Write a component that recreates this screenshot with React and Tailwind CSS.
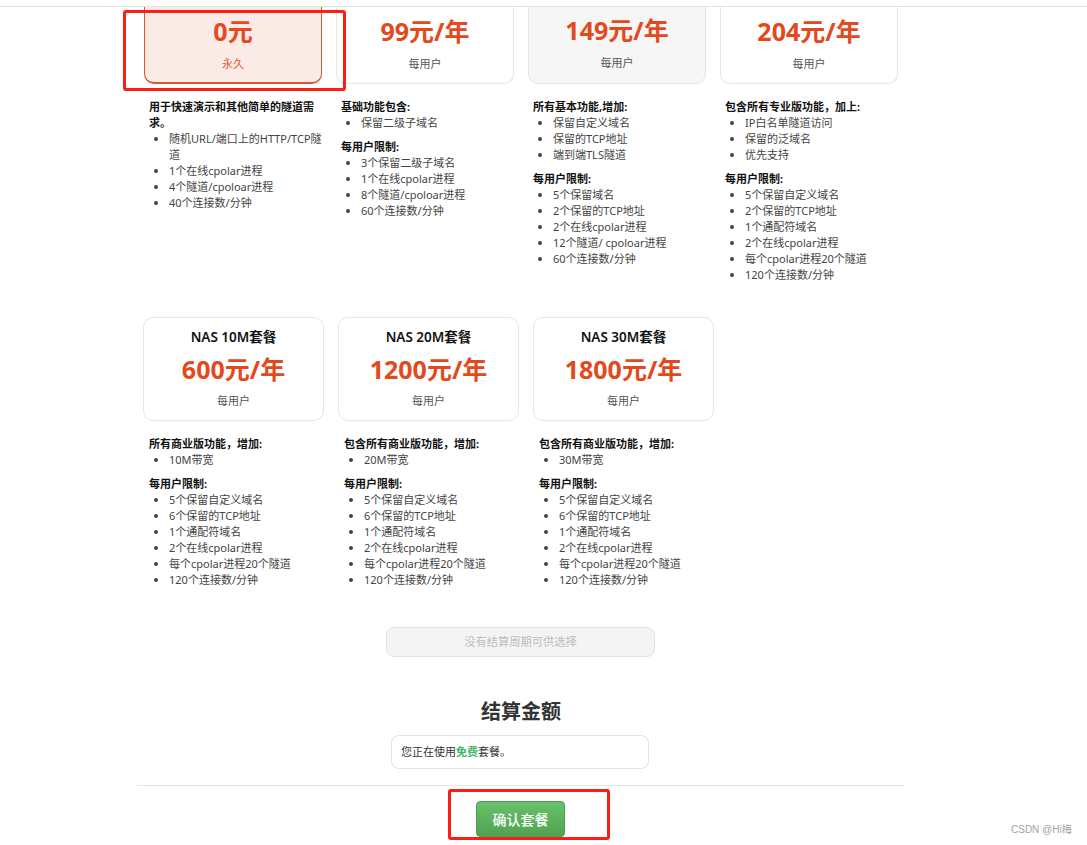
const topPlans = [
  {
    price: "0元", sub: "永久", selected: true,
    intro: "用于快速演示和其他简单的隧道需求。",
    features: ["随机URL/端口上的HTTP/TCP隧道", "1个在线cpolar进程", "4个隧道/cpoloar进程", "40个连接数/分钟"],
  },
  {
    price: "99元/年", sub: "每用户",
    intro: "基础功能包含:",
    features: ["保留二级子域名"],
    limitsTitle: "每用户限制:",
    limits: ["3个保留二级子域名", "1个在线cpolar进程", "8个隧道/cpoloar进程", "60个连接数/分钟"],
  },
  {
    price: "149元/年", sub: "每用户", hover: true,
    intro: "所有基本功能,增加:",
    features: ["保留自定义域名", "保留的TCP地址", "端到端TLS隧道"],
    limitsTitle: "每用户限制:",
    limits: ["5个保留域名", "2个保留的TCP地址", "2个在线cpolar进程", "12个隧道/ cpoloar进程", "60个连接数/分钟"],
  },
  {
    price: "204元/年", sub: "每用户",
    intro: "包含所有专业版功能，加上:",
    features: ["IP白名单隧道访问", "保留的泛域名", "优先支持"],
    limitsTitle: "每用户限制:",
    limits: ["5个保留自定义域名", "2个保留的TCP地址", "1个通配符域名", "2个在线cpolar进程", "每个cpolar进程20个隧道", "120个连接数/分钟"],
  },
];

const nasLimits = ["5个保留自定义域名", "6个保留的TCP地址", "1个通配符域名", "2个在线cpolar进程", "每个cpolar进程20个隧道", "120个连接数/分钟"];

const nasPlans = [
  { title: "NAS 10M套餐", price: "600元/年", intro: "所有商业版功能，增加:", band: "10M带宽" },
  { title: "NAS 20M套餐", price: "1200元/年", intro: "包含所有商业版功能，增加:", band: "20M带宽" },
  { title: "NAS 30M套餐", price: "1800元/年", intro: "包含所有商业版功能，增加:", band: "30M带宽" },
];

function Details({ intro, features, limitsTitle, limits }) {
  return (
    <div className="text-[11px] leading-4 text-[#444]">
      <p className="font-bold text-[#111]">{intro}</p>
      <ul className="list-disc pl-5">
        {features.map((f) => <li key={f}>{f}</li>)}
      </ul>
      {limitsTitle && (
        <>
          <p className="mt-2 font-bold text-[#111]">{limitsTitle}</p>
          <ul className="list-disc pl-5">
            {limits.map((f) => <li key={f}>{f}</li>)}
          </ul>
        </>
      )}
    </div>
  );
}

export default function App() {
  return (
    <div className="relative h-[845px] w-full overflow-hidden bg-white font-['Noto_Sans','Noto_Sans_CJK_SC',sans-serif]">
      <div className="h-[7px] border-b border-[#e2e2e2]" />

      <div className="ml-[137px] w-[768px]">
        <div className="flex h-[276px] items-start gap-[14px] pl-[7px]">
          {topPlans.map((p) => (
            <div key={p.price} className="w-[178px]">
              <div
                className={
                  p.selected
                    ? "flex h-[77px] flex-col items-center rounded-b-[10px] border border-b-2 border-t-0 border-[#e0552f] bg-[#fbebe7] pt-[7px]"
                    : p.hover
                    ? "flex h-[77px] flex-col items-center rounded-b-[10px] border border-t-0 border-[#e6e6e6] bg-[#f6f6f6] pt-[6px]"
                    : "flex h-[77px] flex-col items-center rounded-b-[10px] border border-t-0 border-[#e6e6e6] bg-white pt-[7px]"
                }
              >
                <div className="text-[25px] font-bold leading-[34px] text-[#e2491c]">{p.price}</div>
                <div className={p.selected ? "mt-[8px] text-[11px] leading-4 text-[#e2592f]" : "mt-[8px] text-[11px] leading-4 text-[#555]"}>{p.sub}</div>
              </div>
              <div className="-mr-[2px] mt-[15px] pl-[5px]">
                <Details {...p} />
              </div>
            </div>
          ))}
        </div>

        <div className="mt-[34px] flex h-[272px] items-start gap-[14px] pl-[6px]">
          {nasPlans.map((p) => (
            <div key={p.title} className="w-[181px]">
              <div className="flex h-[104px] flex-col items-center rounded-[10px] border border-[#e6e6e6] bg-white pt-[9px]">
                <div className="text-[13.5px] font-semibold leading-[20px] text-[#111]">{p.title}</div>
                <div className="mt-[5px] text-[25px] font-bold leading-[34px] text-[#e2491c]">{p.price}</div>
                <div className="mt-[7px] text-[11px] leading-4 text-[#555]">每用户</div>
              </div>
              <div className="mt-[15px] pl-[6px]">
                <Details intro={p.intro} features={[p.band]} limitsTitle="每用户限制:" limits={nasLimits} />
              </div>
            </div>
          ))}
        </div>

        <div className="ml-[249px] mt-[38px] flex h-[30px] w-[269px] items-center justify-center rounded-[8px] border border-[#e2e2e2] bg-[#f4f4f4] text-[11.25px] text-[#bdbdbd]">
          没有结算周期可供选择
        </div>

        <h2 className="mt-[41px] text-center text-[20px] font-bold leading-[28px] text-[#333]">结算金额</h2>

        <div className="ml-[254px] mt-[9px] flex h-[34px] w-[258px] items-center rounded-[8px] border border-[#e2e2e2] bg-white pl-[9px] text-[11px] text-[#333]">
          您正在使用<span className="font-semibold text-[#3fb56a]">免费</span>套餐。
        </div>

        <div className="mt-[16px] flex h-[60px] justify-center border-t border-[#e5e5e5] pr-px pt-[15px]">
          <button className="h-[36px] w-[89px] rounded-[4px] border border-[#4f9e4f] bg-gradient-to-b from-[#69c16b] to-[#4ea350] text-[14px] font-medium text-white">
            确认套餐
          </button>
        </div>
      </div>

      <div className="pointer-events-none absolute left-[123px] top-[10px] h-[81px] w-[223px] rounded-[3px] border-[3px] border-[#fa1e14]" />
      <div className="pointer-events-none absolute left-[448px] top-[789px] h-[51px] w-[162px] rounded-[3px] border-[3px] border-[#fa1e14]" />
      <div className="absolute left-[1011px] top-[823px] font-['Liberation_Sans','Noto_Sans_CJK_SC',sans-serif] text-[10px] leading-[14px] text-[#a3a3a3]">CSDN @Hi梅</div>
    </div>
  );
}
